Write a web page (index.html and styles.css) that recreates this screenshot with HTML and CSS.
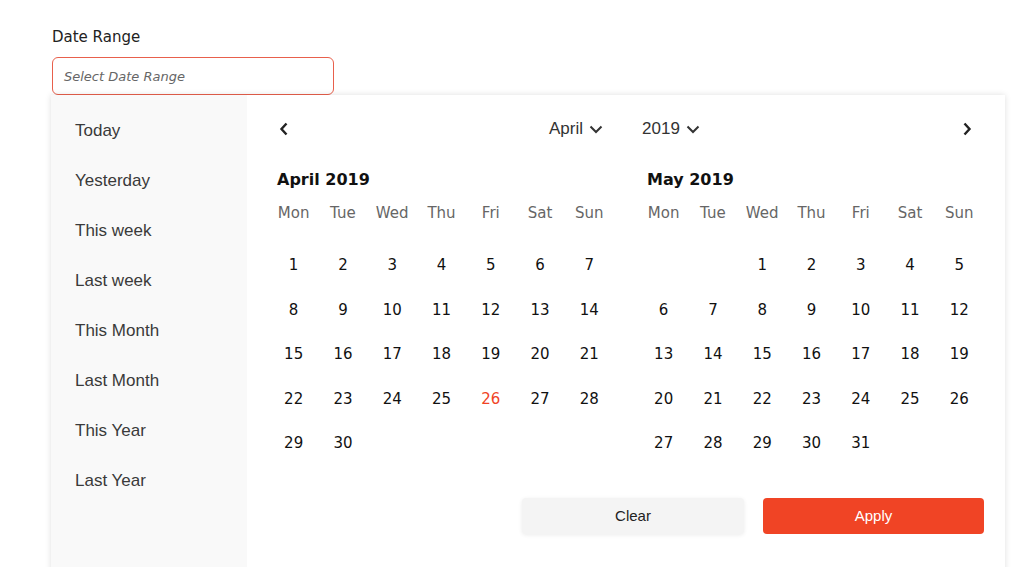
FILE: index.html
```html
<!DOCTYPE html>
<html>
<head>
<meta charset="utf-8">
<link rel="stylesheet" href="styles.css">
</head>
<body>
<div class="page">
  <div class="field-label">Date Range</div>
  <div class="input"><span class="placeholder">Select Date Range</span></div>
  <div class="panel">
    <ul class="presets">
      <li>Today</li>
      <li>Yesterday</li>
      <li>This week</li>
      <li>Last week</li>
      <li>This Month</li>
      <li>Last Month</li>
      <li>This Year</li>
      <li>Last Year</li>
    </ul>
    <div class="pane">
      <div class="nav">
        <span class="arrow"><svg width="10" height="14" viewBox="0 0 10 14"><path d="M7.5 1.5 L2.5 7 L7.5 12.5" fill="none" stroke="#222" stroke-width="2.4"/></svg></span>
        <div class="selects">
          <span class="sel">April <svg width="14" height="9" viewBox="0 0 14 9"><path d="M1.5 1.5 L7 7 L12.5 1.5" fill="none" stroke="#333" stroke-width="2"/></svg></span>
          <span class="sel">2019 <svg width="14" height="9" viewBox="0 0 14 9"><path d="M1.5 1.5 L7 7 L12.5 1.5" fill="none" stroke="#333" stroke-width="2"/></svg></span>
        </div>
        <span class="arrow"><svg width="10" height="14" viewBox="0 0 10 14"><path d="M2.5 1.5 L7.5 7 L2.5 12.5" fill="none" stroke="#222" stroke-width="2.4"/></svg></span>
      </div>
      <div class="months">
        <div class="month">
          <div class="title">April 2019</div>
          <div class="grid head"><span>Mon</span><span>Tue</span><span>Wed</span><span>Thu</span><span>Fri</span><span>Sat</span><span>Sun</span></div>
          <div class="grid days">
            <span>1</span><span>2</span><span>3</span><span>4</span><span>5</span><span>6</span><span>7</span>
            <span>8</span><span>9</span><span>10</span><span>11</span><span>12</span><span>13</span><span>14</span>
            <span>15</span><span>16</span><span>17</span><span>18</span><span>19</span><span>20</span><span>21</span>
            <span>22</span><span>23</span><span>24</span><span>25</span><span class="today">26</span><span>27</span><span>28</span>
            <span>29</span><span>30</span>
          </div>
        </div>
        <div class="month">
          <div class="title">May 2019</div>
          <div class="grid head"><span>Mon</span><span>Tue</span><span>Wed</span><span>Thu</span><span>Fri</span><span>Sat</span><span>Sun</span></div>
          <div class="grid days">
            <span></span><span></span><span>1</span><span>2</span><span>3</span><span>4</span><span>5</span>
            <span>6</span><span>7</span><span>8</span><span>9</span><span>10</span><span>11</span><span>12</span>
            <span>13</span><span>14</span><span>15</span><span>16</span><span>17</span><span>18</span><span>19</span>
            <span>20</span><span>21</span><span>22</span><span>23</span><span>24</span><span>25</span><span>26</span>
            <span>27</span><span>28</span><span>29</span><span>30</span><span>31</span>
          </div>
        </div>
      </div>
      <div class="actions">
        <button class="btn clear">Clear</button>
        <button class="btn apply">Apply</button>
      </div>
    </div>
  </div>
</div>
</body>
</html>
```

FILE: styles.css
```css
html, body {
  margin: 0;
  padding: 0;
  background: #fff;
  overflow: hidden;
  height: 567px;
}
.page {
  padding: 28px 0 0 52px;
}
.field-label {
  font-family: "DejaVu Sans", sans-serif;
  font-size: 15px;
  line-height: 18px;
  color: #222;
  margin-bottom: 11px;
}
.input {
  box-sizing: border-box;
  width: 282px;
  height: 38px;
  border: 1px solid #e8604c;
  border-radius: 6px;
  display: flex;
  align-items: center;
  padding-left: 11px;
}
.placeholder {
  font-family: "DejaVu Sans", sans-serif;
  font-style: italic;
  font-size: 13px;
  color: #666;
}
.panel {
  margin-left: -1px;
  width: 954px;
  height: 500px;
  display: flex;
  background: #fff;
  box-shadow: 0 0 6px rgba(0,0,0,0.13);
}
.presets {
  list-style: none;
  margin: 0;
  padding: 11px 0 0 0;
  width: 199px;
  background: #f9f9f9;
  font-family: "Liberation Sans", Arial, sans-serif;
  font-size: 17px;
  color: #3a3a3a;
}
.presets li {
  height: 50px;
  line-height: 50px;
  padding-left: 24px;
}
.pane {
  flex: 1;
  padding: 17px 21px 0 22px;
}
.nav {
  height: 34px;
  display: flex;
  align-items: center;
  justify-content: space-between;
  padding: 0 12px 0 10px;
}
.arrow {
  display: flex;
  align-items: center;
}
.selects {
  display: flex;
  gap: 39px;
  margin-left: 260px;
  margin-right: auto;
  font-family: "Liberation Sans", Arial, sans-serif;
  font-size: 17px;
  color: #333;
}
.sel {
  display: flex;
  align-items: center;
  gap: 6px;
}
.months {
  display: flex;
  gap: 25px;
}
.month {
  width: 345px;
}
.title {
  margin-top: 24px;
  height: 20px;
  line-height: 20px;
  padding-left: 8px;
  font-family: "DejaVu Sans", sans-serif;
  font-weight: bold;
  font-size: 16px;
  color: #111;
}
.grid {
  display: grid;
  grid-template-columns: repeat(7, 1fr);
  text-align: center;
  font-family: "DejaVu Sans", sans-serif;
  font-size: 15px;
}
.head {
  margin-top: 11px;
  height: 24px;
  line-height: 24px;
  color: #666;
}
.days {
  margin-top: 18px;
  grid-auto-rows: 44.5px;
  line-height: 44.5px;
  color: #111;
}
.days .today {
  color: #f04425;
}
.actions {
  display: flex;
  justify-content: flex-end;
  gap: 19px;
  margin-top: 32px;
}
.btn {
  width: 222px;
  height: 36px;
  border: none;
  border-radius: 4px;
  font-family: "Liberation Sans", Arial, sans-serif;
  font-size: 15px;
}
.apply {
  width: 221px;
}
.clear {
  background: #f4f4f4;
  color: #222;
  box-shadow: 0 1px 4px rgba(0,0,0,0.08);
}
.apply {
  background: #f04425;
  color: #fff;
}
```
